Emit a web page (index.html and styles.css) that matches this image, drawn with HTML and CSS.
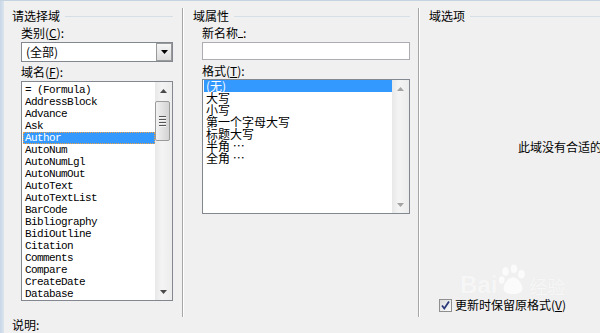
FILE: index.html
```html
<!DOCTYPE html>
<html>
<head>
  <meta charset="UTF-8">
  <title>域</title>
  <link rel="stylesheet" href="styles.css">
</head>
<body>
  <div class="window">
    <div class="columns">

      <!-- 请选择域 -->
      <section class="col col-pick">
        <div class="group-title"><span>请选择域</span></div>
        <div class="group-body">
          <div class="label">类别(<u>C</u>):</div>
          <div class="combo">
            <span class="combo-value">(全部)</span>
            <span class="combo-btn">
              <svg width="7" height="4" viewBox="0 0 7 4"><path d="M0 0h7L3.5 4z" fill="#000"/></svg>
            </span>
          </div>
          <div class="label">域名(<u>F</u>):</div>
          <div class="listbox names">
            <ul class="items">
              <li>= (Formula)</li>
              <li>AddressBlock</li>
              <li>Advance</li>
              <li>Ask</li>
              <li class="selected focused">Author</li>
              <li>AutoNum</li>
              <li>AutoNumLgl</li>
              <li>AutoNumOut</li>
              <li>AutoText</li>
              <li>AutoTextList</li>
              <li>BarCode</li>
              <li>Bibliography</li>
              <li>BidiOutline</li>
              <li>Citation</li>
              <li>Comments</li>
              <li>Compare</li>
              <li>CreateDate</li>
              <li>Database</li>
            </ul>
            <div class="scrollbar">
              <div class="sb-arrow">
                <svg width="7" height="4" viewBox="0 0 7 4"><path d="M3.5 0L7 4H0z" fill="#4a4a4a"/></svg>
              </div>
              <div class="sb-track">
                <div class="sb-thumb">
                  <span class="grip"></span><span class="grip"></span><span class="grip"></span><span class="grip"></span>
                </div>
              </div>
              <div class="sb-arrow">
                <svg width="7" height="4" viewBox="0 0 7 4"><path d="M0 0h7L3.5 4z" fill="#4a4a4a"/></svg>
              </div>
            </div>
          </div>
        </div>
      </section>

      <!-- 域属性 -->
      <section class="col col-props">
        <div class="group-title"><span>域属性</span></div>
        <div class="group-body">
          <div class="label">新名称<span class="akey"></span>:</div>
          <div class="textbox"></div>
          <div class="label label-format">格式(<u>T</u>):</div>
          <div class="listbox formats">
            <ul class="items cjk">
              <li class="selected">(无)</li>
              <li>大写</li>
              <li>小写</li>
              <li>第一个字母大写</li>
              <li>标题大写</li>
              <li>半角 ⋯</li>
              <li>全角 ⋯</li>
            </ul>
            <div class="scrollbar disabled">
              <div class="sb-arrow">
                <svg width="7" height="4" viewBox="0 0 7 4"><path d="M3.5 0L7 4H0z" fill="#a3a3a3"/></svg>
              </div>
              <div class="sb-track"></div>
              <div class="sb-arrow">
                <svg width="7" height="4" viewBox="0 0 7 4"><path d="M0 0h7L3.5 4z" fill="#a3a3a3"/></svg>
              </div>
            </div>
          </div>
        </div>
      </section>

      <!-- 域选项 -->
      <section class="col col-options">
        <div class="group-title"><span>域选项</span></div>
        <div class="message">此域没有合适的选项</div>
        <label class="check-row">
          <span class="checkbox">
            <svg width="11" height="11" viewBox="0 0 11 11"><path d="M2 5.5l2.3 3L9 1.5" fill="none" stroke="#2a3a7a" stroke-width="1.8"/></svg>
          </span>
          <span>更新时保留原格式(<u>V</u>)</span>
        </label>
      </section>
    </div>

    <div class="footer">说明:</div>

    <div class="watermark">
      <span class="wm-bai">Bai</span>
      <svg class="wm-paw" width="32" height="34" viewBox="0 0 34 34">
        <g fill="rgba(255,255,255,0.7)">
          <ellipse cx="9" cy="8" rx="3.5" ry="4.5"/>
          <ellipse cx="18" cy="5" rx="3.5" ry="4.5"/>
          <ellipse cx="26" cy="11" rx="3.5" ry="4.5"/>
          <ellipse cx="5" cy="17" rx="3" ry="4"/>
          <path d="M17 14c-5 0-10 7-10 12 0 4 4 6 10 6s10-2 10-6c0-5-5-12-10-12z"/>
        </g>
      </svg>
      <span class="wm-jy">经验</span>
    </div>
  </div>
</body>
</html>
```

FILE: styles.css
```css
body {
  margin: 0;
  padding: 0;
  width: 600px;
  height: 333px;
  overflow: hidden;
  background-color: #f0f0f0;
  font-family: "Noto Sans CJK SC", "Liberation Sans", sans-serif;
  font-size: 12px;
  color: #000;
}

u {
  text-decoration: underline;
  text-underline-offset: 1px;
}

.window {
  position: relative;
  height: 332px;
  padding-left: 4px;
  border-top: 1px solid #c6d4e2;
  background: linear-gradient(to right, #c7d6e6 0, #dce5ee 4px, #f0f0f0 4px);
}

.columns {
  display: flex;
  margin-top: 7px;
  height: 309px;
}

.col {
  display: flex;
  flex-direction: column;
  box-sizing: border-box;
  height: 309px;
}

.col-pick {
  width: 179px;
  padding: 0 9px 0 8px;
  border-right: 1px solid #a6a6a6;
}

.col-props {
  width: 236px;
  padding: 0 8px 0 9px;
  border-left: 1px solid #ffffff;
  border-right: 1px solid #a6a6a6;
}

.col-options {
  flex: 1;
  padding: 0 0 5px 9px;
  border-left: 1px solid #ffffff;
  overflow: hidden;
}

/* Group titles with etched line */
.group-title {
  display: flex;
  align-items: center;
  gap: 5px;
  padding-top: 1px;
  line-height: 14px;
  height: 14px;
}

.group-title::after {
  content: "";
  flex: 1;
  height: 1px;
  background-color: #d5dfe5;
}

.group-body {
  padding-left: 9px;
}

.label {
  line-height: 14px;
  height: 14px;
  margin-top: 3px;
}

.label-format {
  margin-top: 4px;
}

.akey {
  display: inline-block;
  width: 5px;
  height: 11px;
  border-bottom: 1px solid #000;
  vertical-align: top;
}

/* Combo box */
.combo {
  display: flex;
  align-items: center;
  margin-top: 2px;
  height: 20px;
  box-sizing: border-box;
  border: 1px solid #828790;
  background-color: #fff;
}

.combo-value {
  flex: 1;
  padding-left: 4px;
  line-height: 18px;
}

.combo-btn {
  display: flex;
  align-items: center;
  justify-content: center;
  width: 16px;
  height: 18px;
  box-sizing: border-box;
  border: 1px solid #9a9a9a;
  background: linear-gradient(#f6f6f6, #dcdcdc);
}

/* Text box */
.textbox {
  margin-top: 2px;
  height: 18px;
  box-sizing: border-box;
  border: 1px solid #abadb3;
  background-color: #fff;
}

/* List boxes */
.listbox {
  display: flex;
  margin-top: 2px;
  box-sizing: border-box;
  border: 1px solid #828790;
  background-color: #fff;
  overflow: hidden;
}

.listbox.names {
  height: 220px;
}

.listbox.formats {
  margin-top: 1px;
  height: 135px;
}

.items {
  flex: 1;
  list-style: none;
  margin: 0;
  padding: 2px 0 0 1px;
  font-family: "Liberation Mono", monospace;
  font-size: 11px;
  letter-spacing: -0.6px;
  line-height: 12px;
}

.items li {
  height: 12px;
  padding-left: 2px;
  white-space: nowrap;
}

.items.cjk {
  padding-top: 0;
  font-family: "Noto Sans CJK SC", sans-serif;
  font-size: 12px;
  letter-spacing: 0;
}

.items li.selected {
  background-color: #3399ff;
  color: #fff;
}

.items li.focused {
  outline: 1px dotted #f0a040;
  outline-offset: -1px;
}

/* Scrollbars */
.scrollbar {
  display: flex;
  flex-direction: column;
  width: 17px;
  background: linear-gradient(to right, #e8e8e8, #f4f4f4 40%, #ececec);
}

.sb-arrow {
  display: flex;
  align-items: center;
  justify-content: center;
  height: 17px;
  flex-shrink: 0;
}

.sb-track {
  flex: 1;
  padding-top: 2px;
}

.sb-thumb {
  display: flex;
  flex-direction: column;
  align-items: center;
  justify-content: center;
  gap: 1px;
  width: 15px;
  height: 40px;
  box-sizing: border-box;
  border: 1px solid #9b9b9b;
  border-radius: 2px;
  background: linear-gradient(to right, #f2f2f2, #e2e2e2 50%, #d3d3d3);
}

.grip {
  display: block;
  width: 7px;
  height: 1px;
  background-color: #555;
  border-bottom: 1px solid #f6f6f6;
}

/* Field options */
.message {
  margin-top: 117px;
  padding-left: 89px;
  line-height: 14px;
  white-space: nowrap;
}

.check-row {
  display: flex;
  align-items: center;
  gap: 3px;
  margin-top: auto;
  padding-left: 10px;
  line-height: 14px;
  white-space: nowrap;
}

.checkbox {
  display: flex;
  align-items: center;
  justify-content: center;
  width: 13px;
  height: 13px;
  box-sizing: border-box;
  border: 1px solid #8f8f8f;
  background: linear-gradient(135deg, #dcdcdc, #fbfbfb);
}

.footer {
  padding: 1px 0 0 8px;
  line-height: 14px;
}

/* Baidu watermark */
.watermark {
  position: absolute;
  left: 460px;
  top: 262px;
  display: flex;
  align-items: flex-end;
  height: 34px;
  color: rgba(255, 255, 255, 0.7);
  text-shadow: 0 0 1px rgba(0, 0, 0, 0.05);
  font-family: "Liberation Sans", sans-serif;
  pointer-events: none;
}

.wm-bai {
  font-size: 24px;
  font-weight: bold;
  line-height: 24px;
}

.wm-jy {
  font-family: "Noto Sans CJK SC", sans-serif;
  font-size: 18px;
  line-height: 22px;
}
```
